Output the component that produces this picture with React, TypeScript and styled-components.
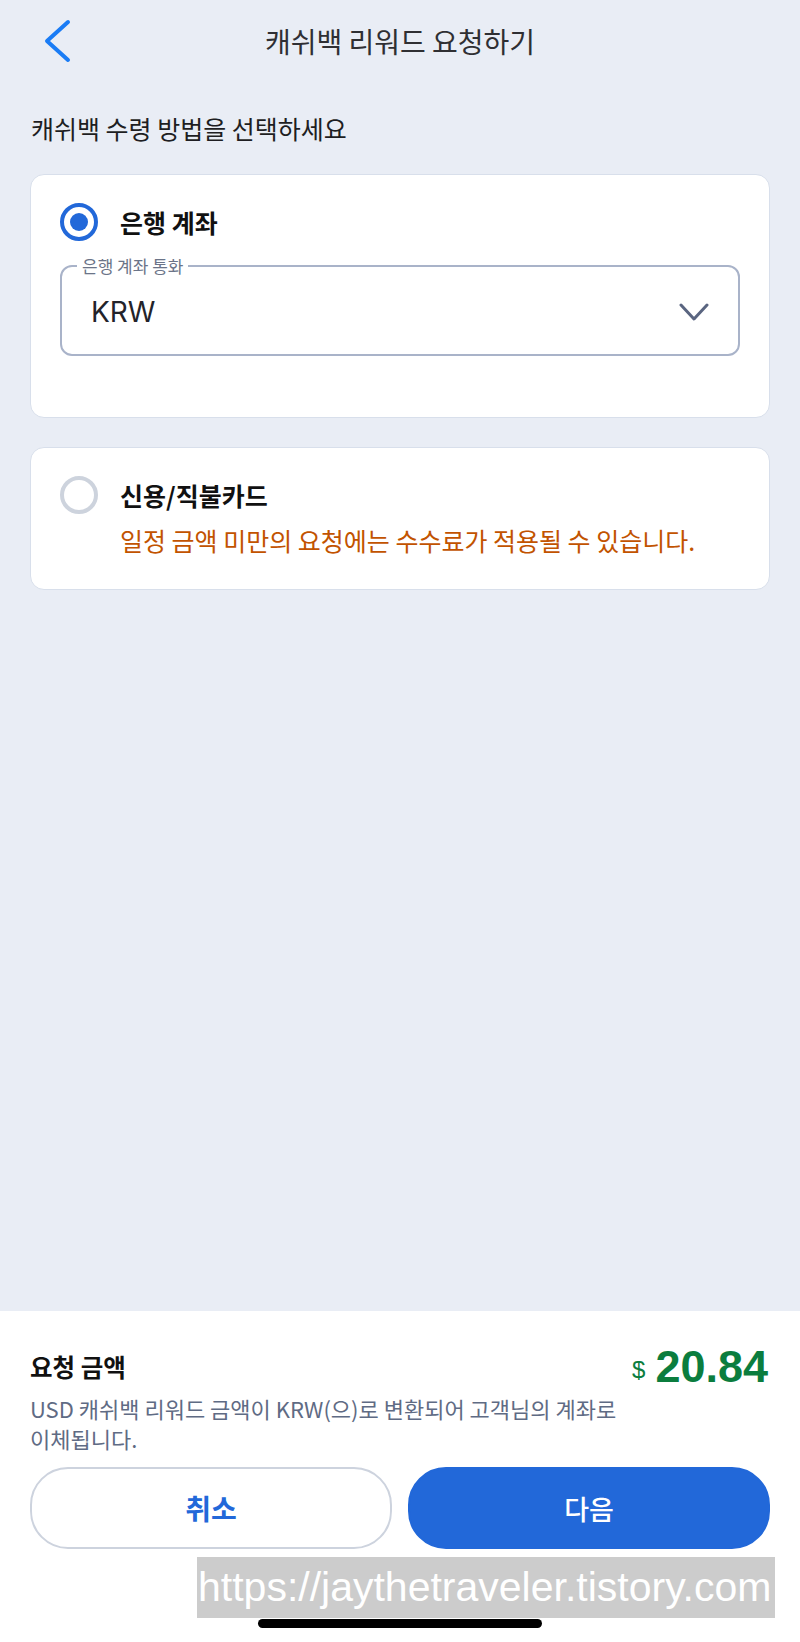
import React from 'react'
import styled, { createGlobalStyle } from 'styled-components'

const GlobalStyle = createGlobalStyle`
	html, body {
		margin: 0;
		padding: 0;
		background: #e9edf5;
	}
	body {
		font-family: 'Noto Sans CJK KR', 'Noto Sans', sans-serif;
		color: #1c1c1e;
	}
	* {
		box-sizing: border-box;
	}
`

const KOR = `'Noto Sans CJK KR', 'Noto Sans', sans-serif`

export default function App() {
	return (
		<>
			<GlobalStyle />
			<Page>
				<Content>
					<Header>
						<BackButton aria-label="뒤로">
							<svg width="30" height="46" viewBox="0 0 30 46">
								<polyline
									points="25,4 4,23 25,42"
									fill="none"
									stroke="#1a7cf5"
									strokeWidth="4"
									strokeLinecap="round"
									strokeLinejoin="round"
								/>
							</svg>
						</BackButton>
						<Title>캐쉬백 리워드 요청하기</Title>
						<span />
					</Header>

					<Subheading>캐쉬백 수령 방법을 선택하세요</Subheading>

					<Card $bottom={61}>
						<OptionRow>
							<Radio $checked />
							<OptionTitle>은행 계좌</OptionTitle>
						</OptionRow>
						<SelectBox>
							<legend>은행 계좌 통화</legend>
							<SelectValue>
								<span>KRW</span>
								<svg width="30" height="18" viewBox="0 0 30 18">
									<polyline
										points="2,2 15,16 28,2"
										fill="none"
										stroke="#5a6580"
										strokeWidth="3"
										strokeLinecap="round"
										strokeLinejoin="round"
									/>
								</svg>
							</SelectValue>
						</SelectBox>
					</Card>

					<Card $bottom={33}>
						<OptionRow>
							<Radio />
							<OptionTitle>신용/직불카드</OptionTitle>
							<Warning>일정 금액 미만의 요청에는 수수료가 적용될 수 있습니다.</Warning>
						</OptionRow>
					</Card>
				</Content>

				<Footer>
					<AmountRow>
						<AmountLabel>요청 금액</AmountLabel>
						<Amount>
							<small>$</small>
							<span>20.84</span>
						</Amount>
					</AmountRow>
					<Description>
						USD 캐쉬백 리워드 금액이 KRW(으)로 변환되어 고객님의 계좌로 이체됩니다.
					</Description>
					<Buttons>
						<ActionButton>취소</ActionButton>
						<ActionButton $primary>다음</ActionButton>
					</Buttons>
					<HomeIndicator />
					<Watermark>https://jaythetraveler.tistory.com</Watermark>
				</Footer>
			</Page>
		</>
	)
}

const Page = styled.div`
	min-height: 100vh;
	display: flex;
	flex-direction: column;
`

const Content = styled.main`
	flex: 1;
	padding: 0 30px;
	display: flex;
	flex-direction: column;
`

const Header = styled.header`
	height: 82px;
	margin: 0 -30px;
	display: grid;
	grid-template-columns: 1fr auto 1fr;
	align-items: center;
`

const BackButton = styled.button`
	justify-self: start;
	margin-left: 43px;
	padding: 0;
	border: 0;
	background: none;
	display: flex;
	cursor: pointer;
`

const Title = styled.h1`
	margin: 0;
	font-family: ${KOR};
	font-size: 28px;
	font-weight: 400;
	line-height: 40px;
	color: #2f2f33;
`

const Subheading = styled.p`
	margin: 30px 0 30px 1px;
	font-family: ${KOR};
	font-size: 25px;
	line-height: 32px;
	color: #1e1e22;
`

const Card = styled.section<{ $bottom: number }>`
	background: #fff;
	border: 1px solid #d8dfeb;
	border-radius: 14px;
	padding: 28px 29px ${(p) => p.$bottom}px;
	margin-bottom: 29px;
`

const OptionRow = styled.div`
	display: grid;
	grid-template-columns: 38px 1fr;
	column-gap: 22px;
	row-gap: 10px;
	align-items: center;
`

const Radio = styled.span<{ $checked?: boolean }>`
	width: 38px;
	height: 38px;
	border-radius: 50%;
	border: 4px solid ${(p) => (p.$checked ? '#2268d9' : '#cdd3dd')};
	display: flex;
	align-items: center;
	justify-content: center;

	&::after {
		content: '';
		width: 18px;
		height: 18px;
		border-radius: 50%;
		background: #2268d9;
		display: ${(p) => (p.$checked ? 'block' : 'none')};
	}
`

const OptionTitle = styled.span`
	font-family: ${KOR};
	font-size: 25px;
	font-weight: 700;
	line-height: 32px;
	color: #111;
`

const Warning = styled.p`
	grid-column: 2;
	margin: 0;
	font-family: ${KOR};
	font-size: 25px;
	line-height: 32px;
	color: #c25300;
`

const SelectBox = styled.fieldset`
	margin: 16px 0 0;
	padding: 0 29px 5px 29px;
	border: 2px solid #a9b3c9;
	border-radius: 12px;

	legend {
		margin-left: -14px;
		padding: 0 5px;
		font-family: ${KOR};
		font-size: 17px;
		line-height: 17px;
		color: #6b7488;
	}
`

const SelectValue = styled.div`
	height: 75px;
	display: flex;
	align-items: center;
	justify-content: space-between;

	span {
		font-family: Inter, 'Noto Sans', sans-serif;
		font-size: 28px;
		color: #23232a;
	}
`

const Footer = styled.footer`
	position: relative;
	background: #fff;
	padding: 33px 30px 14px;
	display: flex;
	flex-direction: column;
`

const AmountRow = styled.div`
	height: 45px;
	display: flex;
	align-items: center;
	justify-content: space-between;
`

const AmountLabel = styled.span`
	font-family: ${KOR};
	font-size: 24.5px;
	font-weight: 700;
	color: #111;
`

const Amount = styled.span`
	display: flex;
	align-items: baseline;
	gap: 10px;
	margin-right: 2px;
	font-family: 'Liberation Sans', Arial, sans-serif;
	font-weight: 700;
	color: #0b7d3e;

	small {
		font-size: 24px;
		font-weight: 400;
		transform: translateY(-4px);
	}
	span {
		font-size: 45px;
		line-height: 45px;
	}
`

const Description = styled.p`
	margin: 4px 0 0;
	max-width: 625px;
	font-family: ${KOR};
	font-size: 22px;
	line-height: 30px;
	word-break: keep-all;
	color: #5f6b84;
`

const Buttons = styled.div`
	margin-top: 14px;
	display: grid;
	grid-template-columns: 1fr 1fr;
	gap: 16px;
`

const ActionButton = styled.button<{ $primary?: boolean }>`
	height: 82px;
	border-radius: 38px;
	border: 2px solid ${(p) => (p.$primary ? '#2268d9' : '#cdd3de')};
	background: ${(p) => (p.$primary ? '#2268d9' : '#fff')};
	color: ${(p) => (p.$primary ? '#fff' : '#2268d9')};
	font-family: ${KOR};
	font-size: ${(p) => (p.$primary ? 27 : 28)}px;
	font-weight: ${(p) => (p.$primary ? 500 : 700)};
	cursor: pointer;
`

const HomeIndicator = styled.div`
	align-self: center;
	margin-top: 70px;
	width: 284px;
	height: 9px;
	border-radius: 5px;
	background: #000;
`

const Watermark = styled.div`
	position: absolute;
	left: 197px;
	top: 246px;
	width: 578px;
	height: 61px;
	background: #cccccc;
	color: #fff;
	font-family: 'Liberation Sans', Arial, sans-serif;
	font-size: 41px;
	line-height: 61px;
	padding-left: 1px;
	white-space: nowrap;
	overflow: hidden;
`
